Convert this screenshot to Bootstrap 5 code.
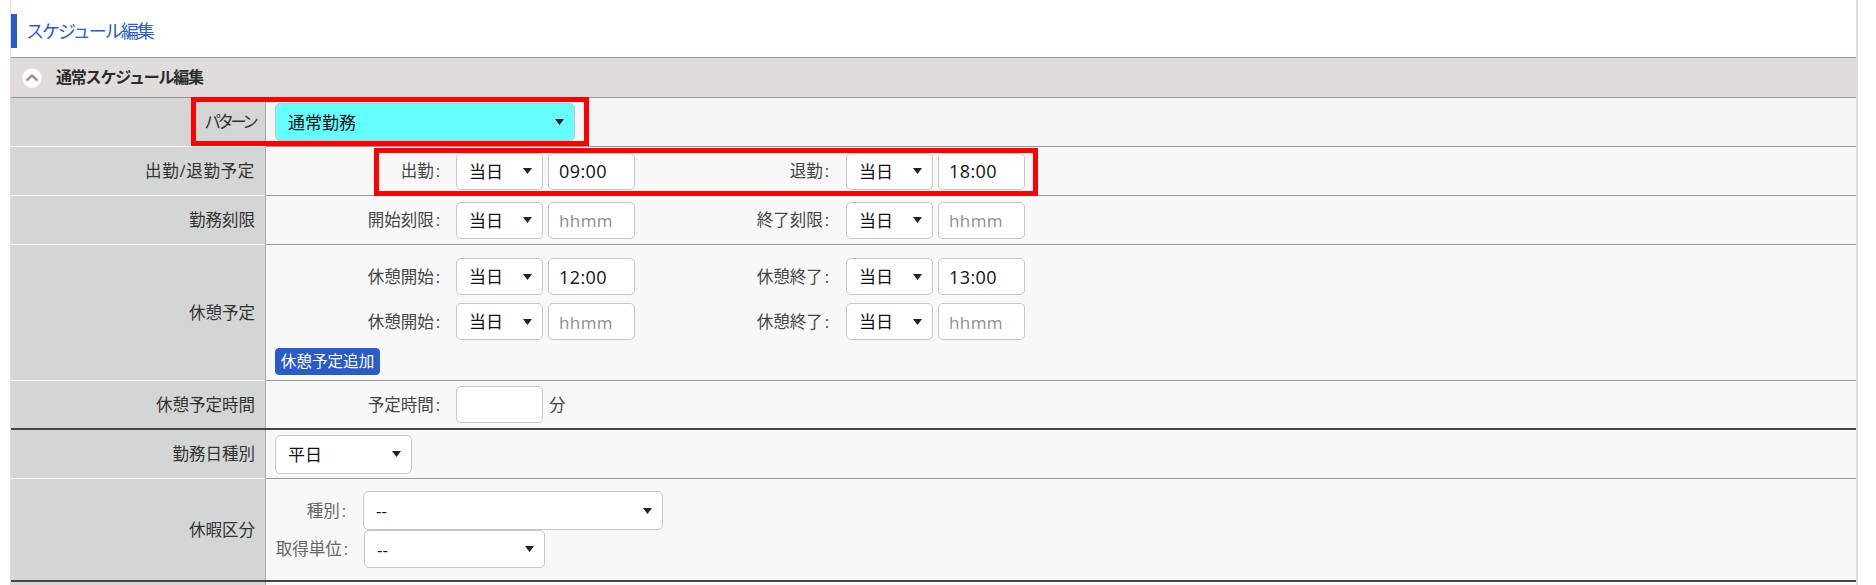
<!DOCTYPE html>
<html lang="ja">
<head>
<meta charset="utf-8">
<title>スケジュール編集</title>
<link href="https://cdn.jsdelivr.net/npm/bootstrap@5.3.0/dist/css/bootstrap.min.css" rel="stylesheet">
<style>
html,body{height:585px;overflow:hidden;background:#fff}
body{font-family:"Open Sans","Noto Sans CJK JP",sans-serif;font-size:16.5px;color:#333;line-height:1.4}
.sheet{position:relative;margin-left:10px;width:1848px;border-left:1px solid #ddd;border-right:2px solid #ddd;height:585px;padding-top:14px}
.page-title{height:34px;border-left:6px solid #2a5bc9;padding-left:9px;color:#2a5bc9;font-size:18px;letter-spacing:-2px;line-height:34px}
.sec-head{margin-top:9px;height:41px;background:#e0dcdc;border-top:1px solid #999;border-bottom:1px solid #999;padding-left:11px;gap:14px;font-weight:700;font-size:16px;letter-spacing:-1.2px;color:#2b2b2b}
.frow{display:flex}
.lab{width:255px;flex:none;background:#d4d5d5;border-top:1px solid #fff;border-right:1px solid #aaa;padding-right:10px;text-align:right;color:#333;display:flex;align-items:center;justify-content:flex-end}
.val{flex:1;background:#f8f8f8;border-top:1px solid #999;padding-left:9px}
.h48{height:48px}.h49{height:49px}.h50{height:50px}.h136{height:136px}.h102{height:102px}.h5{height:5px}
.val-first{background:#f5f5f5;border-top:0}
.lab-first{border-top:0}
.heavy{border-top:2px solid #444}
.heavy .lab,.heavy .val{border-top:0}
.tag{width:165px;flex:none;text-align:right;margin-right:16px;color:#444}
.tag2{width:194px;flex:none;text-align:right;margin-right:17px;color:#444}
.colon{padding-left:2px}
.wide{letter-spacing:.7px}
.form-select.pick,.form-control.box{height:37px;min-height:0;border:1px solid #c6c6c6;border-radius:5px;font-size:17px;color:#111;padding:0 0 0 12px;line-height:35px;box-shadow:none}
.form-select.pick{background-image:url("data:image/svg+xml,%3Csvg xmlns='http://www.w3.org/2000/svg' width='9' height='6'%3E%3Cpath d='M0 0h9L4.5 6z' fill='%23222'/%3E%3C/svg%3E");background-size:9px 6px;background-position:right 10px center;background-repeat:no-repeat}
.form-control.box{padding-left:10px;font-size:18px;letter-spacing:.4px}
.form-control.box::placeholder{color:#8a8f96;font-size:17px}
.w87{width:87px;flex:none}
.w87b{width:87px;flex:none;margin-left:5px}
.form-select.pat{width:300px;height:38px;background-color:#66ffff}
.form-select.kind{width:137px;height:39px}
.form-select.leave{width:300px;height:39px}
.form-select.unit{width:181px;height:38px}
.add-btn{--bs-btn-padding-x:0;--bs-btn-padding-y:0;--bs-btn-font-size:15.6px;--bs-btn-border-radius:4px;--bs-btn-bg:#2a5bc9;--bs-btn-border-color:#2a5bc9;height:27px;width:105px;line-height:25px;white-space:nowrap;overflow:hidden}
.tail{margin-left:6px;color:#444}
.tag3{width:71px;flex:none;text-align:right;margin-right:17px;color:#666}
.tag4{width:73px;flex:none;text-align:right;margin-right:16px;color:#666;white-space:nowrap}
.narrow{letter-spacing:-3.7px}
.p-r1{padding-top:13px}.mt8{margin-top:8px}.mt12{margin-top:12px}
.redbox{position:absolute;border:5px solid #f00;pointer-events:none}
.rb1{left:180px;top:97px;width:398px;height:49px}
.rb2{left:363px;top:148px;width:664px;height:48px}
.circ{width:20px;height:20px;flex:none}
</style>
</head>
<body>
<div class="sheet">
  <div class="page-title">スケジュール編集</div>
  <div class="sec-head d-flex align-items-center">
    <svg class="circ" viewBox="0 0 20 20"><circle cx="10" cy="10" r="9.7" fill="#fff" stroke="#ececec" stroke-width=".6"/><path d="M4.5 12.5 10 7.5 15.5 12.5" fill="none" stroke="#9a9a9a" stroke-width="2.6"/></svg>
    <span>通常スケジュール編集</span>
  </div>

  <div class="frow h48">
    <div class="lab lab-first"><span class="narrow">パターン</span></div>
    <div class="val val-first d-flex align-items-center"><select class="form-select pick pat"><option>通常勤務</option></select></div>
  </div>

  <div class="frow h49">
    <div class="lab"><span class="wide">出勤/退勤予定</span></div>
    <div class="val d-flex align-items-center">
      <span class="tag">出勤<span class="colon">:</span></span><select class="form-select pick w87"><option>当日</option></select><input class="form-control box w87b" value="09:00">
      <span class="tag2">退勤<span class="colon">:</span></span><select class="form-select pick w87"><option>当日</option></select><input class="form-control box w87b" value="18:00">
    </div>
  </div>

  <div class="frow h49">
    <div class="lab">勤務刻限</div>
    <div class="val d-flex align-items-center">
      <span class="tag">開始刻限<span class="colon">:</span></span><select class="form-select pick w87"><option>当日</option></select><input class="form-control box w87b" placeholder="hhmm">
      <span class="tag2">終了刻限<span class="colon">:</span></span><select class="form-select pick w87"><option>当日</option></select><input class="form-control box w87b" placeholder="hhmm">
    </div>
  </div>

  <div class="frow h136">
    <div class="lab">休憩予定</div>
    <div class="val p-r1">
      <div class="d-flex align-items-center">
        <span class="tag">休憩開始<span class="colon">:</span></span><select class="form-select pick w87"><option>当日</option></select><input class="form-control box w87b" value="12:00">
        <span class="tag2">休憩終了<span class="colon">:</span></span><select class="form-select pick w87"><option>当日</option></select><input class="form-control box w87b" value="13:00">
      </div>
      <div class="d-flex align-items-center mt8">
        <span class="tag">休憩開始<span class="colon">:</span></span><select class="form-select pick w87"><option>当日</option></select><input class="form-control box w87b" placeholder="hhmm">
        <span class="tag2">休憩終了<span class="colon">:</span></span><select class="form-select pick w87"><option>当日</option></select><input class="form-control box w87b" placeholder="hhmm">
      </div>
      <div class="mt8"><button type="button" class="btn btn-primary add-btn">休憩予定追加</button></div>
    </div>
  </div>

  <div class="frow h48">
    <div class="lab">休憩予定時間</div>
    <div class="val d-flex align-items-center">
      <span class="tag">予定時間<span class="colon">:</span></span><input class="form-control box w87"><span class="tail">分</span>
    </div>
  </div>

  <div class="frow h50 heavy">
    <div class="lab">勤務日種別</div>
    <div class="val d-flex align-items-center"><select class="form-select pick kind"><option>平日</option></select></div>
  </div>

  <div class="frow h102">
    <div class="lab">休暇区分</div>
    <div class="val">
      <div class="d-flex align-items-center mt12">
        <span class="tag3">種別<span class="colon">:</span></span><select class="form-select pick leave"><option>--</option></select>
      </div>
      <div class="d-flex align-items-center">
        <span class="tag4">取得単位<span class="colon">:</span></span><select class="form-select pick unit"><option>--</option></select>
      </div>
    </div>
  </div>

  <div class="frow heavy h5">
    <div class="lab"></div>
    <div class="val"></div>
  </div>

  <div class="redbox rb1"></div>
  <div class="redbox rb2"></div>
</div>
</body>
</html>
